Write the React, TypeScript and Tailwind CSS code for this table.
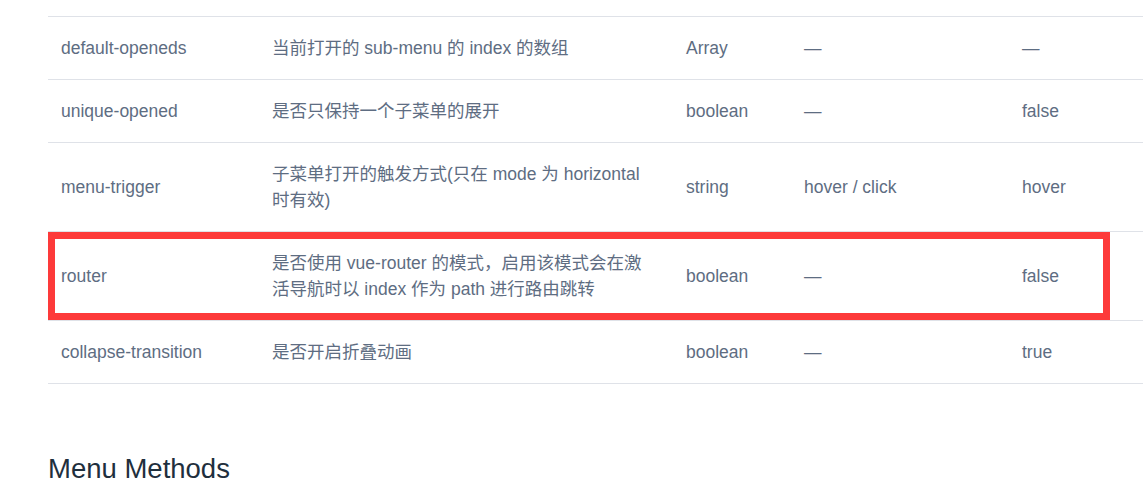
const rows = [
  { name: "default-openeds", desc: ["当前打开的 sub-menu 的 index 的数组"], type: "Array", options: "—", def: "—" },
  { name: "unique-opened", desc: ["是否只保持一个子菜单的展开"], type: "boolean", options: "—", def: "false" },
  {
    name: "menu-trigger",
    desc: ["子菜单打开的触发方式(只在 mode 为 horizontal", "时有效)"],
    type: "string",
    options: "hover / click",
    def: "hover",
  },
  {
    name: "router",
    desc: ["是否使用 vue-router 的模式，启用该模式会在激", "活导航时以 index 作为 path 进行路由跳转"],
    type: "boolean",
    options: "—",
    def: "false",
  },
  { name: "collapse-transition", desc: ["是否开启折叠动画"], type: "boolean", options: "—", def: "true" },
];

const cell = "border-b border-[#dfe2e8] px-[13px] py-[18px] align-middle whitespace-nowrap";

export default function App() {
  return (
    <div
      className="h-[498px] w-[1143px] overflow-hidden bg-white text-[17.5px] leading-[26px] text-[#5e6d82]"
      style={{ fontFamily: '"Liberation Sans", "Noto Sans CJK SC", sans-serif' }}
    >
      <div className="ml-[48px]">
        <div className="h-[17px] border-b border-[#dfe2e8]" />
        <div className="relative">
          <table className="w-[1095px] table-fixed border-collapse text-left">
            <colgroup>
              <col className="w-[211px]" />
              <col className="w-[414px]" />
              <col className="w-[118px]" />
              <col className="w-[218px]" />
              <col />
            </colgroup>
            <tbody>
              {rows.map((r) => (
                <tr key={r.name}>
                  <td className={cell}>{r.name}</td>
                  <td className={cell}>
                    {r.desc.map((line, i) => (
                      <div key={i}>{line}</div>
                    ))}
                  </td>
                  <td className={cell}>{r.type}</td>
                  <td className={cell}>{r.options}</td>
                  <td className={cell}>{r.def}</td>
                </tr>
              ))}
            </tbody>
          </table>
          {/* annotation box around the router row */}
          <div className="pointer-events-none absolute left-0 top-[215px] h-[88px] w-[1062px] border-[7px] border-[#fd3a3a]" />
        </div>
        <h3 className="mt-[69px] text-[27.5px] font-normal leading-[32px] text-[#1f2f3d]">Menu Methods</h3>
      </div>
    </div>
  );
}
